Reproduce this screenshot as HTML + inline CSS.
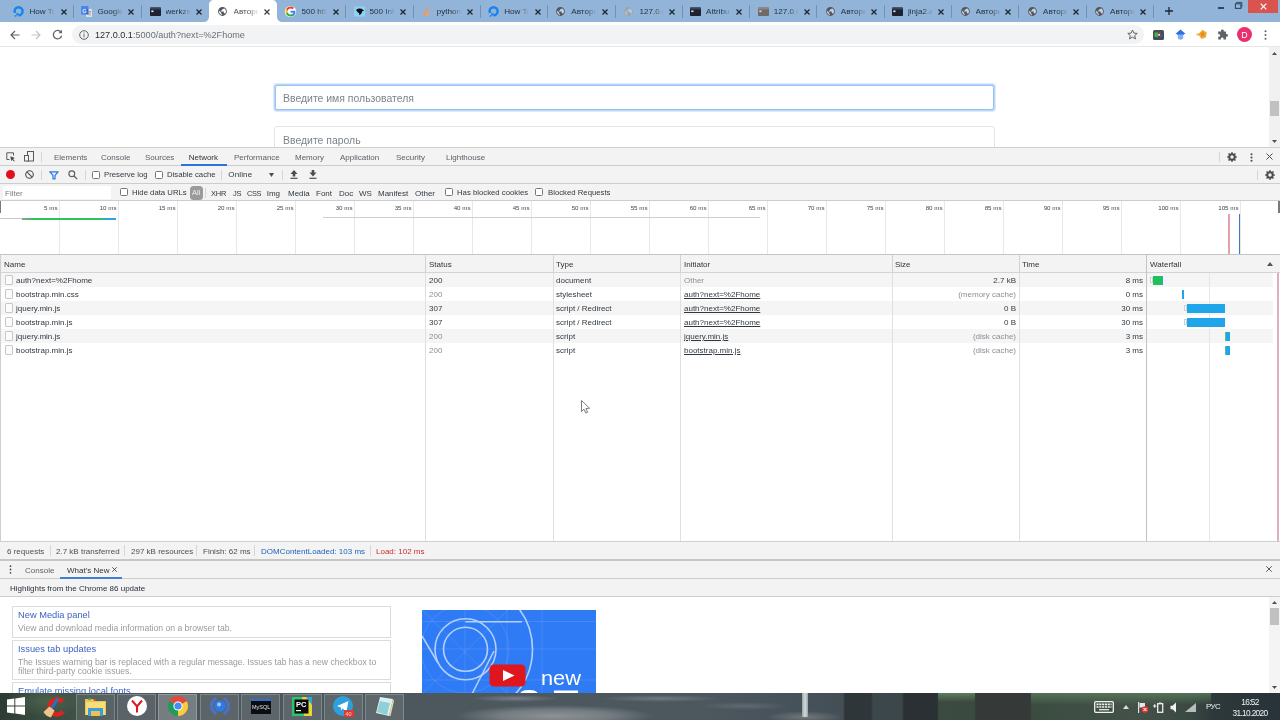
<!DOCTYPE html>
<html lang="ru">
<head>
<meta charset="utf-8">
<title>Авторизация</title>
<style>
*{box-sizing:border-box;margin:0;padding:0}
html,body{width:1280px;height:720px;overflow:hidden;background:#fff}
body{position:relative;font-family:"Liberation Sans","DejaVu Sans",sans-serif;font-size:8px;color:#303942;line-height:1}
#root{position:absolute;left:0;top:0;width:1280px;height:720px;will-change:transform}
.a{position:absolute}
.t{position:absolute;white-space:nowrap;line-height:10px;height:10px}
svg{position:absolute;overflow:visible}
/* chrome tab strip */
#strip{left:0;top:0;width:1280px;height:22px;background:#91b4d8}
.ttl{position:absolute;top:6px;font-size:8.100px;line-height:11px;height:11px;color:#2f3a47;white-space:nowrap;width:25px;overflow:hidden;-webkit-mask-image:linear-gradient(90deg,#000 60%,transparent 100%);mask-image:linear-gradient(90deg,#000 60%,transparent 100%)}
.sep{position:absolute;top:5px;width:1px;height:13px;background:#7390b1}
#toolbar{left:0;top:22px;width:1280px;height:24px;background:#fff}
#tbline{left:0;top:46px;width:1280px;height:1px;background:#e6e8ea}
#omni{left:72px;top:25px;width:1072px;height:19px;border-radius:10px;background:#f1f3f4}
/* devtools */
.bar{position:absolute;left:0;width:1280px;background:#f3f3f3}
.hl{position:absolute;left:0;width:1280px;height:1px;background:#cdcdcd}
.vl{position:absolute;width:1px;background:#d6d6d6}
</style>
</head>
<body>
<div id="root">
<!-- ======= STRIP ======= -->
<div id="strip" class="a"></div><div class="a" style="left:0;top:22px;width:1280px;height:1px;background:#c8d9eb"></div>
<svg class="a" style="left:203px;top:0" width="82" height="23" viewBox="0 0 82 23"><rect x="0" y="22" width="82" height="1" fill="#fff"/><path d="M0 22 C4 22 6 20 6 16 L6 5 C6 2 8 0 11 0 L69 0 C72 0 74 2 74 5 L74 16 C74 20 76 22 80 22 Z" fill="#fff"/></svg>
<svg style="left:13px;top:6px" width="11" height="11" viewBox="0 0 11 11"><circle cx="5.6" cy="5.3" r="4" fill="none" stroke="#1683ee" stroke-width="2.4"/><rect x="0.3" y="7" width="5.200" height="4" fill="#91b4d8"/><rect x="3.3" y="7.200" width="2.3" height="2.3" fill="#1683ee"/><rect x="1.700" y="9.200" width="1.600" height="1.500" fill="#1683ee"/></svg><div class="ttl" style="left:29.5px;color:#27313d">How Tc</div><svg style="left:60.5px;top:9px" width="6" height="6" viewBox="0 0 6 6"><path d="M0.500 0.500 L5.500 5.500 M5.500 0.500 L0.500 5.500" stroke="#1d2630" stroke-width="1.250" fill="none"/></svg>
<svg style="left:81px;top:6px" width="11" height="11" viewBox="0 0 11 11"><rect x="0" y="0" width="7.5" height="8.5" rx="1" fill="#4a85ee"/><rect x="5" y="3" width="6" height="8" rx="1" fill="#dfe3ea"/><path d="M5 3 L7.5 3 L7.5 8.5 L5 8.5 Z" fill="#3a66c4"/><text x="1.2" y="6.8" font-size="6" font-weight="bold" fill="#dfe9fb" font-family="Liberation Sans,sans-serif">G</text><path d="M7 5.500 H10 M8.500 5 V5.500 M9.600 5.500 C9.300 7.500 8 8.800 7 9.300 M7.500 6.500 C8 8 9 9 10 9.400" stroke="#7a8290" stroke-width="0.600" fill="none"/></svg><div class="ttl" style="left:97.5px;color:#27313d">Google</div><svg style="left:128.25px;top:9px" width="6" height="6" viewBox="0 0 6 6"><path d="M0.500 0.500 L5.500 5.500 M5.500 0.500 L0.500 5.500" stroke="#1d2630" stroke-width="1.250" fill="none"/></svg>
<svg style="left:149.5px;top:6px" width="11" height="11" viewBox="0 0 11 11"><rect x="0" y="1.5" width="11" height="8.5" rx="0.8" fill="#1e2230"/><rect x="0" y="1.5" width="11" height="2" rx="0.8" fill="#3d4353"/><rect x="1.3" y="4.5" width="2.2" height="1.6" fill="#e8e8e8"/></svg><div class="ttl" style="left:165.5px;color:#27313d">werkze</div><svg style="left:196.25px;top:9px" width="6" height="6" viewBox="0 0 6 6"><path d="M0.500 0.500 L5.500 5.500 M5.500 0.500 L0.500 5.500" stroke="#1d2630" stroke-width="1.250" fill="none"/></svg>
<svg style="left:217px;top:6px" width="11" height="11" viewBox="0 0 11 11"><g transform="translate(0.220 0.220) scale(0.440)"><path d="M12 2C6.480 2 2 6.480 2 12s4.480 10 10 10 10-4.480 10-10S17.520 2 12 2zm-1 17.930c-3.950-.490-7-3.850-7-7.930 0-.620.080-1.210.210-1.790L9 15v1c0 1.100.900 2 2 2v1.930zm6.900-2.540c-.260-.810-1-1.390-1.900-1.390h-1v-3c0-.550-.450-1-1-1H8v-2h2c.550 0 1-.450 1-1V7h2c1.100 0 2-.900 2-2v-.410c2.930 1.190 5 4.060 5 7.410 0 2.080-.800 3.970-2.100 5.390z" fill="#52565b"/></g></svg><div class="ttl" style="left:233.5px;color:#4a4f55">Автори</div><svg style="left:264.25px;top:9px" width="6" height="6" viewBox="0 0 6 6"><path d="M0.500 0.500 L5.500 5.500 M5.500 0.500 L0.500 5.500" stroke="#3c4043" stroke-width="1.250" fill="none"/></svg>
<svg style="left:285px;top:6px" width="11" height="11" viewBox="0 0 11 11"><circle cx="5.5" cy="5.5" r="5.600" fill="#fff"/><path d="M10.4 5.7 c0 -0.4 0 -0.7 -0.1 -1 H5.6 v2 h2.7 c-0.1 0.6 -0.5 1.2 -1 1.5 v1.3 h1.6 c1 -0.9 1.5 -2.2 1.5 -3.8z" fill="#4285f4"/><path d="M5.6 10.6 c1.4 0 2.5 -0.5 3.3 -1.2 l-1.6 -1.3 c-0.5 0.3 -1 0.5 -1.7 0.5 c-1.300 0 -2.4 -0.9 -2.8 -2.100 H1.100 v1.300 c0.800 1.700 2.500 2.800 4.500 2.800z" fill="#34a853"/><path d="M2.800 6.500 c-0.100 -0.300 -0.200 -0.600 -0.200 -1 s0.100 -0.700 0.200 -1 V3.200 H1.100 C0.800 3.900 0.600 4.700 0.600 5.500 s0.200 1.600 0.500 2.300 l1.700 -1.300z" fill="#fbbc05"/><path d="M5.600 2.400 c0.800 0 1.400 0.300 2 0.800 l1.400 -1.400 C8.100 0.900 7 0.400 5.600 0.400 c-2 0 -3.700 1.100 -4.500 2.800 l1.700 1.300 c0.400 -1.200 1.500 -2.100 2.800 -2.100z" fill="#ea4335"/><circle cx="5.5" cy="5.500" r="5.400" fill="#fff" style="mix-blend-mode:normal" opacity="0"/></svg><div class="ttl" style="left:301.5px;color:#27313d">500 htt</div><svg style="left:332.5px;top:9px" width="6" height="6" viewBox="0 0 6 6"><path d="M0.500 0.500 L5.500 5.500 M5.500 0.500 L0.500 5.500" stroke="#1d2630" stroke-width="1.250" fill="none"/></svg>
<svg style="left:353.5px;top:6px" width="11" height="11" viewBox="0 0 11 11"><rect x="0" y="0.500" width="11" height="10" fill="#8fd3f4"/><path d="M2 4.500 C2.500 2.500 5 2 7 2.800 C8.500 3.200 9.500 4 10 5 L8 5.200 C8 6.500 7.500 7.800 6 8.800 L5 8.800 L5.200 7 C4 6.800 3.200 6 3 5 Z" fill="#0c0c10"/></svg><div class="ttl" style="left:369.5px;color:#27313d">500 Int</div><svg style="left:399.5px;top:9px" width="6" height="6" viewBox="0 0 6 6"><path d="M0.500 0.500 L5.500 5.500 M5.500 0.500 L0.500 5.500" stroke="#1d2630" stroke-width="1.250" fill="none"/></svg>
<svg style="left:420.5px;top:6px" width="11" height="11" viewBox="0 0 11 11"><path d="M2 10 C2.500 7 4 3 7.500 1 C8 3 8.200 6 7.500 9.500 C6 10 4 10.200 2 10 Z" fill="#dca57a"/><path d="M3 9.500 C4.500 7 6 4 7.200 2" stroke="#c98e62" stroke-width="0.600" fill="none"/></svg><div class="ttl" style="left:436.75px;color:#27313d">python</div><svg style="left:467px;top:9px" width="6" height="6" viewBox="0 0 6 6"><path d="M0.500 0.500 L5.500 5.500 M5.500 0.500 L0.500 5.500" stroke="#1d2630" stroke-width="1.250" fill="none"/></svg>
<svg style="left:488px;top:6px" width="11" height="11" viewBox="0 0 11 11"><circle cx="5.6" cy="5.3" r="4" fill="none" stroke="#1683ee" stroke-width="2.4"/><rect x="0.3" y="7" width="5.200" height="4" fill="#91b4d8"/><rect x="3.3" y="7.200" width="2.3" height="2.3" fill="#1683ee"/><rect x="1.700" y="9.200" width="1.600" height="1.500" fill="#1683ee"/></svg><div class="ttl" style="left:504.25px;color:#27313d">How Tc</div><svg style="left:534.5px;top:9px" width="6" height="6" viewBox="0 0 6 6"><path d="M0.500 0.500 L5.500 5.500 M5.500 0.500 L0.500 5.500" stroke="#1d2630" stroke-width="1.250" fill="none"/></svg>
<svg style="left:555px;top:6px" width="11" height="11" viewBox="0 0 11 11"><circle cx="5.500" cy="5.500" r="4" fill="#c3d4e8"/><g transform="translate(0.220 0.220) scale(0.440)"><path d="M12 2C6.480 2 2 6.480 2 12s4.480 10 10 10 10-4.480 10-10S17.520 2 12 2zm-1 17.930c-3.950-.490-7-3.850-7-7.930 0-.620.080-1.210.210-1.790L9 15v1c0 1.100.900 2 2 2v1.930zm6.900-2.540c-.260-.810-1-1.390-1.900-1.390h-1v-3c0-.550-.450-1-1-1H8v-2h2c.550 0 1-.450 1-1V7h2c1.100 0 2-.900 2-2v-.410c2.930 1.190 5 4.060 5 7.410 0 2.080-.800 3.970-2.100 5.390z" fill="#52565b"/></g></svg><div class="ttl" style="left:571.25px;color:#27313d">Автори</div><svg style="left:601.5px;top:9px" width="6" height="6" viewBox="0 0 6 6"><path d="M0.500 0.500 L5.500 5.500 M5.500 0.500 L0.500 5.500" stroke="#1d2630" stroke-width="1.250" fill="none"/></svg>
<svg style="left:622.5px;top:6px" width="11" height="11" viewBox="0 0 11 11"><circle cx="5.500" cy="5.500" r="4" fill="#b7c9de"/><g transform="translate(0.220 0.220) scale(0.440)"><path d="M12 2C6.480 2 2 6.480 2 12s4.480 10 10 10 10-4.480 10-10S17.520 2 12 2zm-1 17.930c-3.950-.490-7-3.850-7-7.930 0-.620.080-1.210.210-1.790L9 15v1c0 1.100.900 2 2 2v1.930zm6.900-2.540c-.260-.810-1-1.390-1.900-1.390h-1v-3c0-.550-.450-1-1-1H8v-2h2c.550 0 1-.450 1-1V7h2c1.100 0 2-.900 2-2v-.410c2.930 1.190 5 4.060 5 7.410 0 2.080-.800 3.970-2.100 5.390z" fill="#9aa3ad"/></g></svg><div class="ttl" style="left:639.4px;color:#27313d">127.0.0</div><svg style="left:669px;top:9px" width="6" height="6" viewBox="0 0 6 6"><path d="M0.500 0.500 L5.500 5.500 M5.500 0.500 L0.500 5.500" stroke="#1d2630" stroke-width="1.250" fill="none"/></svg>
<svg style="left:690px;top:6px" width="11" height="11" viewBox="0 0 11 11"><rect x="0" y="1.5" width="11" height="8.5" rx="0.8" fill="#1e2230"/><rect x="0" y="1.5" width="11" height="2" rx="0.8" fill="#3d4353"/><rect x="1.3" y="4.5" width="2.2" height="1.6" fill="#e8e8e8"/></svg><div class="ttl" style="left:706px;color:#27313d">Attribu</div><svg style="left:736.25px;top:9px" width="6" height="6" viewBox="0 0 6 6"><path d="M0.500 0.500 L5.500 5.500 M5.500 0.500 L0.500 5.500" stroke="#1d2630" stroke-width="1.250" fill="none"/></svg>
<svg style="left:757.5px;top:6px" width="11" height="11" viewBox="0 0 11 11"><rect x="0" y="1.5" width="11" height="8.5" rx="0.8" fill="#6f6a68"/><rect x="0" y="1.5" width="11" height="2" rx="0.8" fill="#8b8684"/><rect x="1.3" y="4.5" width="2.2" height="1.6" fill="#d8d8d8"/></svg><div class="ttl" style="left:773.75px;color:#27313d">127.0.0</div><svg style="left:803.75px;top:9px" width="6" height="6" viewBox="0 0 6 6"><path d="M0.500 0.500 L5.500 5.500 M5.500 0.500 L0.500 5.500" stroke="#1d2630" stroke-width="1.250" fill="none"/></svg>
<svg style="left:824.5px;top:6px" width="11" height="11" viewBox="0 0 11 11"><circle cx="5.500" cy="5.500" r="4" fill="#c3d4e8"/><g transform="translate(0.220 0.220) scale(0.440)"><path d="M12 2C6.480 2 2 6.480 2 12s4.480 10 10 10 10-4.480 10-10S17.520 2 12 2zm-1 17.930c-3.950-.490-7-3.850-7-7.930 0-.620.080-1.210.210-1.790L9 15v1c0 1.100.900 2 2 2v1.930zm6.900-2.540c-.260-.810-1-1.390-1.900-1.390h-1v-3c0-.550-.450-1-1-1H8v-2h2c.550 0 1-.450 1-1V7h2c1.100 0 2-.900 2-2v-.410c2.930 1.190 5 4.060 5 7.410 0 2.080-.800 3.970-2.100 5.390z" fill="#52565b"/></g></svg><div class="ttl" style="left:840.75px;color:#27313d">Автори</div><svg style="left:870.75px;top:9px" width="6" height="6" viewBox="0 0 6 6"><path d="M0.500 0.500 L5.500 5.500 M5.500 0.500 L0.500 5.500" stroke="#1d2630" stroke-width="1.250" fill="none"/></svg>
<svg style="left:892px;top:6px" width="11" height="11" viewBox="0 0 11 11"><rect x="0" y="1.5" width="11" height="8.5" rx="0.8" fill="#1e2230"/><rect x="0" y="1.5" width="11" height="2" rx="0.8" fill="#3d4353"/><rect x="1.3" y="4.5" width="2.2" height="1.6" fill="#e8e8e8"/></svg><div class="ttl" style="left:908px;color:#27313d">jinja2.e</div><svg style="left:938.25px;top:9px" width="6" height="6" viewBox="0 0 6 6"><path d="M0.500 0.500 L5.500 5.500 M5.500 0.500 L0.500 5.500" stroke="#1d2630" stroke-width="1.250" fill="none"/></svg>
<svg style="left:959.5px;top:6px" width="11" height="11" viewBox="0 0 11 11"><circle cx="5.500" cy="5.500" r="4" fill="#c3d4e8"/><g transform="translate(0.220 0.220) scale(0.440)"><path d="M12 2C6.480 2 2 6.480 2 12s4.480 10 10 10 10-4.480 10-10S17.520 2 12 2zm-1 17.930c-3.950-.490-7-3.850-7-7.930 0-.620.080-1.210.210-1.790L9 15v1c0 1.100.900 2 2 2v1.930zm6.900-2.540c-.260-.810-1-1.390-1.900-1.390h-1v-3c0-.550-.450-1-1-1H8v-2h2c.550 0 1-.450 1-1V7h2c1.100 0 2-.900 2-2v-.410c2.930 1.190 5 4.060 5 7.410 0 2.080-.800 3.970-2.100 5.390z" fill="#52565b"/></g></svg><div class="ttl" style="left:975.5px;color:#27313d">Автори</div><svg style="left:1005.25px;top:9px" width="6" height="6" viewBox="0 0 6 6"><path d="M0.500 0.500 L5.500 5.500 M5.500 0.500 L0.500 5.500" stroke="#1d2630" stroke-width="1.250" fill="none"/></svg>
<svg style="left:1026.5px;top:6px" width="11" height="11" viewBox="0 0 11 11"><circle cx="5.500" cy="5.500" r="4" fill="#c3d4e8"/><g transform="translate(0.220 0.220) scale(0.440)"><path d="M12 2C6.480 2 2 6.480 2 12s4.480 10 10 10 10-4.480 10-10S17.520 2 12 2zm-1 17.930c-3.950-.490-7-3.850-7-7.930 0-.620.080-1.210.210-1.790L9 15v1c0 1.100.900 2 2 2v1.930zm6.900-2.540c-.260-.810-1-1.390-1.900-1.390h-1v-3c0-.550-.450-1-1-1H8v-2h2c.550 0 1-.450 1-1V7h2c1.100 0 2-.900 2-2v-.410c2.930 1.190 5 4.060 5 7.410 0 2.080-.800 3.970-2.100 5.390z" fill="#52565b"/></g></svg><div class="ttl" style="left:1043px;color:#27313d">Автори</div><svg style="left:1072.75px;top:9px" width="6" height="6" viewBox="0 0 6 6"><path d="M0.500 0.500 L5.500 5.500 M5.500 0.500 L0.500 5.500" stroke="#1d2630" stroke-width="1.250" fill="none"/></svg>
<svg style="left:1094px;top:6px" width="11" height="11" viewBox="0 0 11 11"><circle cx="5.500" cy="5.500" r="4" fill="#c3d4e8"/><g transform="translate(0.220 0.220) scale(0.440)"><path d="M12 2C6.480 2 2 6.480 2 12s4.480 10 10 10 10-4.480 10-10S17.520 2 12 2zm-1 17.930c-3.950-.490-7-3.850-7-7.930 0-.620.080-1.210.210-1.790L9 15v1c0 1.100.900 2 2 2v1.930zm6.900-2.540c-.260-.810-1-1.390-1.900-1.390h-1v-3c0-.550-.450-1-1-1H8v-2h2c.550 0 1-.450 1-1V7h2c1.100 0 2-.900 2-2v-.410c2.930 1.190 5 4.060 5 7.410 0 2.080-.800 3.970-2.100 5.390z" fill="#52565b"/></g></svg><div class="ttl" style="left:1110px;color:#27313d">Автори</div><svg style="left:1140.25px;top:9px" width="6" height="6" viewBox="0 0 6 6"><path d="M0.500 0.500 L5.500 5.500 M5.500 0.500 L0.500 5.500" stroke="#1d2630" stroke-width="1.250" fill="none"/></svg>
<div class="sep" style="left:72.75px"></div><div class="sep" style="left:140.75px"></div><div class="sep" style="left:344.5px"></div><div class="sep" style="left:412.5px"></div><div class="sep" style="left:480.0px"></div><div class="sep" style="left:547.0px"></div><div class="sep" style="left:614.5px"></div><div class="sep" style="left:682.0px"></div><div class="sep" style="left:748.75px"></div><div class="sep" style="left:816.25px"></div><div class="sep" style="left:883.75px"></div><div class="sep" style="left:950.75px"></div><div class="sep" style="left:1018.25px"></div><div class="sep" style="left:1085.75px"></div><div class="sep" style="left:1153.25px"></div>
<svg style="left:1165px;top:7px" width="8" height="8" viewBox="0 0 8 8"><path d="M4 0 V8 M0 4 H8" stroke="#1d2630" stroke-width="1.300"/></svg>
<div class="a" style="left:1218px;top:7px;width:6px;height:2px;background:#31475f"></div>
<svg style="left:1235px;top:2px" width="7.300" height="7.300" viewBox="0 0 8 8"><path d="M1.500 1.500 V0.500 H7.500 V5.500 H6.500" stroke="#31475f" stroke-width="1" fill="none"/><rect x="0.500" y="2" width="6" height="5" fill="none" stroke="#31475f" stroke-width="1.200"/></svg>
<div class="a" style="left:1248px;top:0;width:30px;height:13px;background:#d9534f"></div>
<svg style="left:1260px;top:3px" width="7" height="7" viewBox="0 0 7 7"><path d="M0.700 0.700 L6.300 6.300 M6.300 0.700 L0.700 6.300" stroke="#fff" stroke-width="1.200" fill="none"/></svg>
<!-- ======= TOOLBAR ======= -->
<div id="toolbar" class="a"></div><div id="omni" class="a"></div><div id="tbline" class="a"></div>
<svg style="left:10px;top:30px" width="10" height="10" viewBox="0 0 10 10"><path d="M9.500 5 H1.200 M5 1 L1 5 L5 9" stroke="#5f6368" stroke-width="1.200" fill="none"/></svg>
<svg style="left:31px;top:30px" width="10" height="10" viewBox="0 0 10 10"><path d="M0.500 5 H8.800 M5 1 L9 5 L5 9" stroke="#c2c5c9" stroke-width="1.200" fill="none"/></svg>
<svg style="left:52px;top:29px" width="11" height="11" viewBox="0 0 11 11"><path d="M9 3.200 A4.200 4.200 0 1 0 9.600 6.800" stroke="#5f6368" stroke-width="1.300" fill="none"/><path d="M10 0.800 V4.300 H6.500 Z" fill="#5f6368"/></svg>
<svg style="left:79px;top:30px" width="10" height="10" viewBox="0 0 10 10"><circle cx="5" cy="5" r="4.300" fill="none" stroke="#5f6368" stroke-width="1"/><rect x="4.500" y="4.300" width="1" height="3" fill="#5f6368"/><rect x="4.500" y="2.500" width="1" height="1" fill="#5f6368"/></svg>
<div class="t" style="left:95px;top:29px;font-size:9.100px;line-height:12px;height:12px;color:#6b7075"><span style="color:#2b2e31">127.0.0.1</span>:5000/auth?next=%2Fhome</div>
<svg style="left:1127px;top:29px" width="11" height="11" viewBox="0 0 11 11"><path d="M5.500 1 L6.900 4.100 L10.200 4.400 L7.700 6.600 L8.500 9.900 L5.500 8.100 L2.500 9.900 L3.300 6.600 L0.800 4.400 L4.100 4.100 Z" fill="none" stroke="#5f6368" stroke-width="1"/></svg>
<svg style="left:1153px;top:30px" width="11" height="10" viewBox="0 0 11 10"><rect x="0" y="0" width="11" height="10" rx="1.500" fill="#4a4d4f"/><rect x="1.500" y="2.500" width="3.500" height="4.500" fill="#3fb24a"/><rect x="5.500" y="2.500" width="2" height="2" fill="#d93a30"/><rect x="7" y="4.500" width="2.500" height="2.500" fill="#2c58c9"/><rect x="5.300" y="4" width="1.700" height="1.700" fill="#eee"/></svg>
<svg style="left:1175px;top:29px" width="11" height="11" viewBox="0 0 11 11"><path d="M5.500 0.500 L10.700 5 L9 5 L8.500 6 L2.500 6 L2 5 L0.300 5 Z" fill="#2f6fe0"/><path d="M2.800 5.500 H8.200 V8.500 C8.200 10 6.800 10.700 5.500 10.700 C4.200 10.700 2.800 10 2.800 8.500 Z" fill="#7fb0f5"/></svg>
<svg style="left:1196px;top:29px" width="12" height="11" viewBox="0 0 12 11"><path d="M0.500 5 L3 4.200 L6.500 0.800 L10.800 3.500 L9.800 8.500 L5.500 10 L3 6.500 L0.500 6.200 Z" fill="#f4a73a"/><path d="M4.500 4 L8 3 L8.500 7 L5.500 7.500 Z" fill="#e38d1f"/></svg>
<svg style="left:1217px;top:29px" width="11" height="11" viewBox="0 0 11 11"><path d="M4 1.800 a1.400 1.400 0 0 1 2.800 0 V2.500 H9 V5 h0.600 a1.400 1.400 0 0 1 0 2.800 H9 V10.500 H6.500 V9.800 a1.300 1.300 0 0 0 -2.600 0 V10.500 H1.200 V7.800 H1.900 a1.300 1.300 0 0 0 0 -2.600 H1.200 V2.500 H4 Z" fill="#5f6368"/></svg>
<div class="a" style="left:1237px;top:27px;width:15px;height:15px;border-radius:8px;background:#e9306f"></div><div class="t" style="left:1237px;top:30px;width:15px;text-align:center;color:#fff;font-size:8.800px">D</div>
<svg style="left:1264px;top:30px" width="3" height="10" viewBox="0 0 3 10"><circle cx="1.500" cy="1.300" r="1" fill="#5f6368"/><circle cx="1.500" cy="5" r="1" fill="#5f6368"/><circle cx="1.500" cy="8.700" r="1" fill="#5f6368"/></svg>
<!-- ======= PAGE ======= -->
<div class="a" style="left:273px;top:83px;width:723px;height:29px;border-radius:4px;background:#deeafa"></div><div class="a" style="left:274px;top:84px;width:721px;height:27px;border-radius:3px;background:#bcd7f6"></div><div class="a" style="left:275px;top:85px;width:719px;height:25px;border:1px solid #93c1f0;border-radius:2.500px;background:#fff"></div>
<div class="t" style="left:283px;top:93.200px;font-size:10.450px;line-height:12px;height:12px;color:#7d848b">Введите имя пользователя</div>
<div class="a" style="left:274px;top:126px;width:721px;height:30px;border:1px solid #e2e5e8;border-radius:3px;background:#fff"></div>
<div class="t" style="left:283px;top:134.900px;font-size:10.450px;line-height:12px;height:12px;color:#7d848b">Введите пароль</div>
<div class="a" style="left:1269px;top:47px;width:11px;height:101px;background:#f1f1f1"></div><div class="a" style="left:1270px;top:101px;width:9px;height:15px;background:#c1c1c1"></div><svg style="left:1272px;top:52px" width="5" height="3" viewBox="0 0 5 3"><path d="M0 3 L2.500 0 L5 3 Z" fill="#505050"/></svg><svg style="left:1272px;top:140px" width="5" height="3" viewBox="0 0 5 3"><path d="M0 0 L2.500 3 L5 0 Z" fill="#505050"/></svg>
<!-- ======= DEVTOOLS ======= -->
<div class="hl" style="top:147px;background:#d0d0d0"></div><div class="bar" style="top:148px;height:18px"></div><div class="hl" style="top:165px"></div><div class="bar" style="top:166px;height:18px"></div><div class="hl" style="top:183px"></div><div class="bar" style="top:184px;height:17px"></div><div class="hl" style="top:200px"></div>
<svg style="left:6px;top:152px" width="10" height="10" viewBox="0 0 10 10"><path d="M7.500 3.500 V0.800 H0.800 V7.500 H3.500" fill="none" stroke="#5a5a5a" stroke-width="1"/><path d="M4.300 4.300 L9 6 L7 7 L8.800 9 L8 9.600 L6.300 7.700 L5.300 9.200 Z" fill="#4a4a4a"/></svg><svg style="left:24px;top:151px" width="10" height="11" viewBox="0 0 10 11"><rect x="3.500" y="0.500" width="6" height="9.500" fill="none" stroke="#5a5a5a" stroke-width="1"/><rect x="0.500" y="4.500" width="4" height="5.500" fill="#f3f3f3" stroke="#5a5a5a" stroke-width="1"/></svg><div class="vl" style="left:41px;top:152px;height:10px"></div>
<div class="t" style="left:54px;top:152.6px;color:#5a5f66">Elements</div><div class="t" style="left:101px;top:152.6px;color:#5a5f66">Console</div><div class="t" style="left:145px;top:152.6px;color:#5a5f66">Sources</div><div class="t" style="left:188.7px;top:152.6px;color:#333">Network</div><div class="t" style="left:234px;top:152.6px;color:#5a5f66">Performance</div><div class="t" style="left:295px;top:152.6px;color:#5a5f66">Memory</div><div class="t" style="left:340px;top:152.6px;color:#5a5f66">Application</div><div class="t" style="left:396px;top:152.6px;color:#5a5f66">Security</div><div class="t" style="left:446px;top:152.6px;color:#5a5f66">Lighthouse</div><div class="a" style="left:181px;top:164px;width:46px;height:2px;background:#2f73d8"></div>
<div class="vl" style="left:1219px;top:152px;height:10px"></div><svg style="left:1227px;top:152px" width="10" height="10" viewBox="0.500 0 10 10"><path d="M5 0 L6 0 L6.300 1.300 L7.400 1.800 L8.600 1.100 L9.400 1.900 L8.700 3.100 L9.200 4.200 L10.500 4.500 V5.500 L9.200 5.800 L8.700 6.900 L9.400 8.100 L8.600 8.900 L7.400 8.200 L6.300 8.700 L6 10 H5 L4.700 8.700 L3.600 8.200 L2.400 8.900 L1.600 8.100 L2.300 6.900 L1.800 5.800 L0.500 5.500 V4.500 L1.800 4.200 L2.300 3.100 L1.600 1.900 L2.400 1.100 L3.600 1.800 L4.700 1.300 Z M5.500 3.300 A1.700 1.700 0 1 0 5.500 6.700 A1.700 1.700 0 1 0 5.500 3.300 Z" fill="#4d4d4d" fill-rule="evenodd"/></svg><svg style="left:1250px;top:153px" width="3" height="9" viewBox="0 0 3 9"><circle cx="1.500" cy="1.200" r="1.050" fill="#4d4d4d"/><circle cx="1.500" cy="4.500" r="1.050" fill="#4d4d4d"/><circle cx="1.500" cy="7.800" r="1.050" fill="#4d4d4d"/></svg><svg style="left:1266px;top:153px" width="7" height="7" viewBox="0 0 7 7"><path d="M0.500 0.500 L6.500 6.500 M6.500 0.500 L0.500 6.500" stroke="#4d4d4d" stroke-width="1" fill="none"/></svg>
<div class="a" style="left:6px;top:170px;width:9px;height:9px;border-radius:5px;background:#e0101c"></div><svg style="left:25px;top:170px" width="9" height="9" viewBox="0 0 9 9"><circle cx="4.500" cy="4.500" r="3.800" fill="none" stroke="#4d4d4d" stroke-width="1.100"/><path d="M1.800 1.800 L7.200 7.200" stroke="#4d4d4d" stroke-width="1.100"/></svg><div class="vl" style="left:41px;top:170px;height:10px"></div><svg style="left:49px;top:171px" width="10" height="9" viewBox="0 0 10 9"><path d="M0.800 0.800 H9.200 L6 4.300 V8 H4 V4.300 Z" fill="#e8f0fd" stroke="#2d73e0" stroke-width="1.200" stroke-linejoin="round"/></svg><svg style="left:68px;top:170px" width="10" height="10" viewBox="0 0 10 10"><circle cx="3.800" cy="3.800" r="2.900" fill="none" stroke="#5a5a5a" stroke-width="1.100"/><path d="M6 6 L9.200 9.200" stroke="#5a5a5a" stroke-width="1.200"/></svg><div class="vl" style="left:85px;top:170px;height:10px"></div>
<div class="a" style="left:92px;top:171px;width:8px;height:8px;border:1px solid #767676;border-radius:1.500px;background:#fff"></div><div class="t" style="left:104px;top:170.4px;font-size:7.750px">Preserve log</div><div class="a" style="left:155px;top:171px;width:8px;height:8px;border:1px solid #767676;border-radius:1.500px;background:#fff"></div><div class="t" style="left:167px;top:170.4px;font-size:7.750px">Disable cache</div><div class="vl" style="left:221px;top:170px;height:10px"></div><div class="t" style="left:228.3px;top:170.4px;font-size:8px;letter-spacing:0.150px">Online</div><svg style="left:269px;top:173px" width="5" height="4" viewBox="0 0 5 4"><path d="M0 0 H5 L2.500 4 Z" fill="#4d4d4d"/></svg><div class="vl" style="left:282px;top:170px;height:10px"></div><svg style="left:290px;top:170px" width="8" height="9" viewBox="0 0 8 9"><path d="M4 0 L7.500 4 H5.300 V6.500 H2.700 V4 H0.500 Z" fill="#4d4d4d"/><rect x="0.500" y="7.700" width="7" height="1.200" fill="#4d4d4d"/></svg><svg style="left:309px;top:170px" width="8" height="9" viewBox="0 0 8 9"><path d="M4 6.500 L7.500 2.500 H5.300 V0 H2.700 V2.500 H0.500 Z" fill="#4d4d4d"/><rect x="0.500" y="7.700" width="7" height="1.200" fill="#4d4d4d"/></svg>
<div class="vl" style="left:1257px;top:170px;height:10px"></div><svg style="left:1265px;top:170px" width="10" height="10" viewBox="0.500 0 10 10"><path d="M5 0 L6 0 L6.300 1.300 L7.400 1.800 L8.600 1.100 L9.400 1.900 L8.700 3.100 L9.200 4.200 L10.500 4.500 V5.500 L9.200 5.800 L8.700 6.900 L9.400 8.100 L8.600 8.900 L7.400 8.200 L6.300 8.700 L6 10 H5 L4.700 8.700 L3.600 8.200 L2.400 8.900 L1.600 8.100 L2.300 6.900 L1.800 5.800 L0.500 5.500 V4.500 L1.800 4.200 L2.300 3.100 L1.600 1.900 L2.400 1.100 L3.600 1.800 L4.700 1.300 Z M5.500 3.300 A1.700 1.700 0 1 0 5.500 6.700 A1.700 1.700 0 1 0 5.500 3.300 Z" fill="#4d4d4d" fill-rule="evenodd"/></svg>
<div class="a" style="left:3px;top:186px;width:108px;height:13px;background:#fff"></div><div class="t" style="left:5px;top:188.6px;color:#7a7f85">Filter</div><div class="a" style="left:120px;top:188px;width:8px;height:8px;border:1px solid #767676;border-radius:1.500px;background:#fff"></div><div class="t" style="left:132px;top:188px;font-size:7.750px">Hide data URLs</div><div class="a" style="left:190px;top:186px;width:13px;height:14px;border-radius:3.500px;background:#9b9b9b"></div><div class="t" style="left:192px;top:188px;color:#f0f0f0;font-size:7.500px">All</div><div class="vl" style="left:205px;top:188px;height:10px"></div><div class="t" style="left:211px;top:188.5px;font-size:7.500px;letter-spacing:-0.250px">XHR</div><div class="t" style="left:233px;top:188.5px;font-size:7.500px;letter-spacing:-0.250px">JS</div><div class="t" style="left:247px;top:188.5px;font-size:7.400px;letter-spacing:-0.350px">CSS</div><div class="t" style="left:266.7px;top:188.5px;">Img</div><div class="t" style="left:288px;top:188.5px;">Media</div><div class="t" style="left:316px;top:188.5px;">Font</div><div class="t" style="left:339px;top:188.5px;">Doc</div><div class="t" style="left:359px;top:188.5px;">WS</div><div class="t" style="left:378px;top:188.5px;">Manifest</div><div class="t" style="left:415px;top:188.5px;">Other</div>
<div class="a" style="left:445px;top:188px;width:8px;height:8px;border:1px solid #767676;border-radius:1.500px;background:#fff"></div><div class="t" style="left:457px;top:188px;font-size:7.750px">Has blocked cookies</div><div class="a" style="left:535px;top:188px;width:8px;height:8px;border:1px solid #767676;border-radius:1.500px;background:#fff"></div><div class="t" style="left:548px;top:188px;font-size:7.750px">Blocked Requests</div>
<div class="vl" style="left:59px;top:201px;height:53px;background:#e8e8e8"></div><div class="t" style="right:1222.5px;top:203.3px;font-size:6.200px;color:#41474d">5 ms</div><div class="vl" style="left:118px;top:201px;height:53px;background:#e8e8e8"></div><div class="t" style="right:1163.5px;top:203.3px;font-size:6.200px;color:#41474d">10 ms</div><div class="vl" style="left:177px;top:201px;height:53px;background:#e8e8e8"></div><div class="t" style="right:1104.5px;top:203.3px;font-size:6.200px;color:#41474d">15 ms</div><div class="vl" style="left:236px;top:201px;height:53px;background:#e8e8e8"></div><div class="t" style="right:1045.5px;top:203.3px;font-size:6.200px;color:#41474d">20 ms</div><div class="vl" style="left:295px;top:201px;height:53px;background:#e8e8e8"></div><div class="t" style="right:986.5px;top:203.3px;font-size:6.200px;color:#41474d">25 ms</div><div class="vl" style="left:354px;top:201px;height:53px;background:#e8e8e8"></div><div class="t" style="right:927.5px;top:203.3px;font-size:6.200px;color:#41474d">30 ms</div><div class="vl" style="left:413px;top:201px;height:53px;background:#e8e8e8"></div><div class="t" style="right:868.5px;top:203.3px;font-size:6.200px;color:#41474d">35 ms</div><div class="vl" style="left:472px;top:201px;height:53px;background:#e8e8e8"></div><div class="t" style="right:809.5px;top:203.3px;font-size:6.200px;color:#41474d">40 ms</div><div class="vl" style="left:531px;top:201px;height:53px;background:#e8e8e8"></div><div class="t" style="right:750.5px;top:203.3px;font-size:6.200px;color:#41474d">45 ms</div><div class="vl" style="left:590px;top:201px;height:53px;background:#e8e8e8"></div><div class="t" style="right:691.5px;top:203.3px;font-size:6.200px;color:#41474d">50 ms</div><div class="vl" style="left:649px;top:201px;height:53px;background:#e8e8e8"></div><div class="t" style="right:632.5px;top:203.3px;font-size:6.200px;color:#41474d">55 ms</div><div class="vl" style="left:708px;top:201px;height:53px;background:#e8e8e8"></div><div class="t" style="right:573.5px;top:203.3px;font-size:6.200px;color:#41474d">60 ms</div><div class="vl" style="left:767px;top:201px;height:53px;background:#e8e8e8"></div><div class="t" style="right:514.5px;top:203.3px;font-size:6.200px;color:#41474d">65 ms</div><div class="vl" style="left:826px;top:201px;height:53px;background:#e8e8e8"></div><div class="t" style="right:455.5px;top:203.3px;font-size:6.200px;color:#41474d">70 ms</div><div class="vl" style="left:885px;top:201px;height:53px;background:#e8e8e8"></div><div class="t" style="right:396.5px;top:203.3px;font-size:6.200px;color:#41474d">75 ms</div><div class="vl" style="left:944px;top:201px;height:53px;background:#e8e8e8"></div><div class="t" style="right:337.5px;top:203.3px;font-size:6.200px;color:#41474d">80 ms</div><div class="vl" style="left:1003px;top:201px;height:53px;background:#e8e8e8"></div><div class="t" style="right:278.5px;top:203.3px;font-size:6.200px;color:#41474d">85 ms</div><div class="vl" style="left:1062px;top:201px;height:53px;background:#e8e8e8"></div><div class="t" style="right:219.5px;top:203.3px;font-size:6.200px;color:#41474d">90 ms</div><div class="vl" style="left:1121px;top:201px;height:53px;background:#e8e8e8"></div><div class="t" style="right:160.5px;top:203.3px;font-size:6.200px;color:#41474d">95 ms</div><div class="vl" style="left:1180px;top:201px;height:53px;background:#e8e8e8"></div><div class="t" style="right:101.5px;top:203.3px;font-size:6.200px;color:#41474d">100 ms</div><div class="vl" style="left:1240px;top:201px;height:53px;background:#e8e8e8"></div><div class="t" style="right:41.5px;top:203.3px;font-size:6.200px;color:#41474d">105 ms</div>
<div class="a" style="left:0;top:201px;width:1px;height:12px;background:#7a7a7a"></div><div class="a" style="left:1278px;top:201px;width:2px;height:12px;background:#7a7a7a"></div><div class="a" style="left:0;top:218px;width:24px;height:1px;background:#c9c9c9"></div><div class="a" style="left:22px;top:218px;width:94px;height:2px;background:linear-gradient(90deg,#9a9a9a 0,#2fc25b 12%,#2fc25b 80%,#2aa5e6 92%,#2aa5e6 100%)"></div><div class="a" style="left:323px;top:217px;width:437px;height:1px;background:#cfcfcf"></div><div class="a" style="left:1228px;top:214px;width:2px;height:40px;background:#e3a3ac"></div><div class="a" style="left:1239px;top:214px;width:1px;height:40px;background:#3f78c4"></div><div class="hl" style="top:254px;background:#c4c4c4"></div>
<div class="bar" style="top:255px;height:17px"></div><div class="hl" style="top:272px;background:#d4d4d4"></div><div class="a" style="left:0;top:273px;width:1273px;height:14px;background:#f5f5f5"></div><div class="a" style="left:0;top:301px;width:1273px;height:14px;background:#f5f5f5"></div><div class="a" style="left:0;top:329px;width:1273px;height:14px;background:#f5f5f5"></div><div class="vl" style="left:425px;top:255px;height:18px;background:#d2d2d2"></div><div class="vl" style="left:425px;top:273px;height:268px;background:#e0e0e0"></div><div class="vl" style="left:553px;top:255px;height:18px;background:#d2d2d2"></div><div class="vl" style="left:553px;top:273px;height:268px;background:#e0e0e0"></div><div class="vl" style="left:680px;top:255px;height:18px;background:#d2d2d2"></div><div class="vl" style="left:680px;top:273px;height:268px;background:#e0e0e0"></div><div class="vl" style="left:892px;top:255px;height:18px;background:#d2d2d2"></div><div class="vl" style="left:892px;top:273px;height:268px;background:#e0e0e0"></div><div class="vl" style="left:1019px;top:255px;height:18px;background:#d2d2d2"></div><div class="vl" style="left:1019px;top:273px;height:268px;background:#e0e0e0"></div><div class="vl" style="left:1146px;top:255px;height:18px;background:#c4c4c4"></div><div class="vl" style="left:1146px;top:273px;height:268px;background:#c2c2c2"></div><div class="vl" style="left:1209px;top:273px;height:268px;background:#e6e6e6"></div><div class="vl" style="left:0;top:255px;height:286px;background:#cfcfcf"></div><div class="a" style="left:1277px;top:273px;width:1.500px;height:268px;background:#deb0b9"></div>
<div class="t" style="left:4px;top:260.2px;color:#333">Name</div><div class="t" style="left:429px;top:260.2px;color:#333">Status</div><div class="t" style="left:556px;top:260.2px;color:#333">Type</div><div class="t" style="left:684px;top:260.2px;color:#333">Initiator</div><div class="t" style="left:895px;top:260.2px;color:#333">Size</div><div class="t" style="left:1022px;top:260.2px;color:#333">Time</div><div class="t" style="left:1150px;top:260.2px;color:#333">Waterfall</div><svg style="left:1267px;top:262px" width="6" height="4" viewBox="0 0 6 4"><path d="M0 4 L3 0 L6 4 Z" fill="#555"/></svg>
<div class="a" style="left:5px;top:275px;width:8px;height:10px;border:1px solid #c8c8c8;background:#fbfbfb;border-radius:1px"></div><div class="t" style="left:16px;top:276px;">auth?next=%2Fhome</div><div class="t" style="left:429px;top:276px;color:#333a41">200</div><div class="t" style="left:556px;top:276px;">document</div><div class="t" style="left:684px;top:276px;color:#8a8f94">Other</div><div class="t" style="right:264px;top:276px;color:#333a41">2.7 kB</div><div class="t" style="right:137px;top:276px;">8 ms</div>
<div class="a" style="left:5px;top:289px;width:8px;height:10px;border:1px solid #c8c8c8;background:#fbfbfb;border-radius:1px"></div><div class="t" style="left:16px;top:290px;">bootstrap.min.css</div><div class="t" style="left:429px;top:290px;color:#8a8f94">200</div><div class="t" style="left:556px;top:290px;">stylesheet</div><div class="t" style="left:684px;top:290px;text-decoration:underline">auth?next=%2Fhome</div><div class="t" style="right:264px;top:290px;color:#8a8f94">(memory cache)</div><div class="t" style="right:137px;top:290px;">0 ms</div>
<div class="a" style="left:5px;top:303px;width:8px;height:10px;border:1px solid #c8c8c8;background:#fbfbfb;border-radius:1px"></div><div class="t" style="left:16px;top:304px;">jquery.min.js</div><div class="t" style="left:429px;top:304px;color:#333a41">307</div><div class="t" style="left:556px;top:304px;">script / Redirect</div><div class="t" style="left:684px;top:304px;text-decoration:underline">auth?next=%2Fhome</div><div class="t" style="right:264px;top:304px;color:#333a41">0 B</div><div class="t" style="right:137px;top:304px;">30 ms</div>
<div class="a" style="left:5px;top:317px;width:8px;height:10px;border:1px solid #c8c8c8;background:#fbfbfb;border-radius:1px"></div><div class="t" style="left:16px;top:318px;">bootstrap.min.js</div><div class="t" style="left:429px;top:318px;color:#333a41">307</div><div class="t" style="left:556px;top:318px;">script / Redirect</div><div class="t" style="left:684px;top:318px;text-decoration:underline">auth?next=%2Fhome</div><div class="t" style="right:264px;top:318px;color:#333a41">0 B</div><div class="t" style="right:137px;top:318px;">30 ms</div>
<div class="a" style="left:5px;top:331px;width:8px;height:10px;border:1px solid #c8c8c8;background:#fbfbfb;border-radius:1px"></div><div class="t" style="left:16px;top:332px;">jquery.min.js</div><div class="t" style="left:429px;top:332px;color:#8a8f94">200</div><div class="t" style="left:556px;top:332px;">script</div><div class="t" style="left:684px;top:332px;text-decoration:underline">jquery.min.js</div><div class="t" style="right:264px;top:332px;color:#8a8f94">(disk cache)</div><div class="t" style="right:137px;top:332px;">3 ms</div>
<div class="a" style="left:5px;top:345px;width:8px;height:10px;border:1px solid #c8c8c8;background:#fbfbfb;border-radius:1px"></div><div class="t" style="left:16px;top:346px;">bootstrap.min.js</div><div class="t" style="left:429px;top:346px;color:#8a8f94">200</div><div class="t" style="left:556px;top:346px;">script</div><div class="t" style="left:684px;top:346px;text-decoration:underline">bootstrap.min.js</div><div class="t" style="right:264px;top:346px;color:#8a8f94">(disk cache)</div><div class="t" style="right:137px;top:346px;">3 ms</div>
<div class="a" style="left:1150px;top:277px;width:3px;height:6px;border:1px solid #d0d0d0;background:#fff"></div><div class="a" style="left:1153px;top:276px;width:10px;height:9px;background:#1fc15c;border-right:1px solid #2fa7c0"></div><div class="a" style="left:1182.300px;top:290px;width:1.500px;height:9px;background:#1ea5ea"></div><div class="a" style="left:1184px;top:305px;width:3px;height:6px;border:1px solid #d0d0d0;background:#fff"></div><div class="a" style="left:1187px;top:304px;width:38px;height:9px;background:#1ea5ea"></div><div class="a" style="left:1184px;top:319px;width:3px;height:6px;border:1px solid #d0d0d0;background:#fff"></div><div class="a" style="left:1187px;top:318px;width:38px;height:9px;background:#1ea5ea"></div><div class="a" style="left:1225px;top:332px;width:5px;height:9px;background:#1ea5ea;border-left:1px solid #55c08a"></div><div class="a" style="left:1225px;top:346px;width:5px;height:9px;background:#1ea5ea;border-left:1px solid #55c08a"></div>
<svg style="left:580.500px;top:400.200px" width="10" height="14" viewBox="0 0 10 14"><path d="M0.500 0.500 V11.500 L3 9.200 L4.800 13 L6.600 12.200 L4.900 8.600 L8.600 8.200 Z" fill="#fff" stroke="#454548" stroke-width="0.700" stroke-linejoin="round"/></svg>
<div class="hl" style="top:541px;background:#cfcfcf"></div><div class="bar" style="top:542px;height:17px"></div><div class="hl" style="top:559px;height:2px;background:#c6c6c6"></div><div class="t" style="left:7px;top:546.7px;color:#4a4f55">6 requests</div><div class="t" style="left:56px;top:546.7px;color:#4a4f55">2.7 kB transferred</div><div class="t" style="left:131px;top:546.7px;color:#4a4f55">297 kB resources</div><div class="t" style="left:203px;top:546.7px;color:#4a4f55">Finish: 62 ms</div><div class="t" style="left:261px;top:546.7px;color:#1b62b8">DOMContentLoaded: 103 ms</div><div class="t" style="left:376px;top:546.7px;color:#c5302a">Load: 102 ms</div><div class="vl" style="left:50px;top:545px;height:11px"></div><div class="vl" style="left:124px;top:545px;height:11px"></div><div class="vl" style="left:196px;top:545px;height:11px"></div><div class="vl" style="left:254px;top:545px;height:11px"></div><div class="vl" style="left:370px;top:545px;height:11px"></div>
<!-- ======= DRAWER ======= -->
<div class="bar" style="top:561px;height:17px"></div><div class="hl" style="top:578px"></div><div class="bar" style="top:579px;height:17px"></div><div class="hl" style="top:596px"></div>
<svg style="left:9px;top:565px" width="3" height="9" viewBox="0 0 3 9"><circle cx="1.500" cy="1.200" r="0.900" fill="#4d4d4d"/><circle cx="1.500" cy="4.500" r="0.900" fill="#4d4d4d"/><circle cx="1.500" cy="7.800" r="0.900" fill="#4d4d4d"/></svg><div class="t" style="left:25px;top:565.5px;color:#5a5f66">Console</div><div class="t" style="left:67px;top:565.5px;color:#333">What's New</div><svg style="left:112px;top:567px" width="5" height="5" viewBox="0 0 5 5"><path d="M0.300 0.300 L4.700 4.700 M4.700 0.300 L0.300 4.700" stroke="#444" stroke-width="0.900" fill="none"/></svg><div class="a" style="left:60px;top:577px;width:62px;height:2px;background:#3f7fd6"></div><svg style="left:1266px;top:566px" width="6" height="6" viewBox="0 0 6 6"><path d="M0.300 0.300 L5.700 5.700 M5.700 0.300 L0.300 5.700" stroke="#444" stroke-width="0.900" fill="none"/></svg>
<div class="t" style="left:10px;top:583.5px;color:#2b3138">Highlights from the Chrome 86 update</div><div class="a" style="left:12px;top:606px;width:379px;height:32px;border:1px solid #dcdcdc;background:#fff"></div><div class="t" style="left:18px;top:608.8px;color:#3d62c4;font-size:9.300px;line-height:12px;height:12px">New Media panel</div><div class="t" style="left:18px;top:624.2px;color:#9b9b9b;font-size:8.600px;line-height:9px;height:9px">View and download media information on a browser tab.</div><div class="a" style="left:12px;top:640px;width:379px;height:40px;border:1px solid #dcdcdc;background:#fff"></div><div class="t" style="left:18px;top:642.8px;color:#3d62c4;font-size:9.300px;line-height:12px;height:12px">Issues tab updates</div><div class="t" style="left:18px;top:658.2px;color:#9b9b9b;font-size:8.600px;line-height:9px;height:9px">The Issues warning bar is replaced with a regular message. Issues tab has a new checkbox to</div><div class="t" style="left:18px;top:667px;color:#9b9b9b;font-size:8.600px;line-height:9px;height:9px">filter third-party cookie issues.</div><div class="a" style="left:12px;top:682px;width:379px;height:40px;border:1px solid #dcdcdc;background:#fff"></div><div class="t" style="left:18px;top:684.9px;color:#3d62c4;font-size:9.300px;line-height:12px;height:12px">Emulate missing local fonts</div>
<svg style="left:422px;top:610px;overflow:hidden" width="174" height="84" viewBox="0 0 174 84"><rect width="174" height="84" fill="#2f7bf5"/><g stroke="#fff" stroke-opacity="0.180" stroke-width="0.600" fill="none"><path d="M43 0 V84 M85 0 V84 M120 0 V84 M0 39 H174 M0 11.500 H174 M0 70 H174 M0 0 L86 84 M86 0 L0 84"/><circle cx="43" cy="39" r="44"/></g><g stroke="#b2d0fb" stroke-width="1.600" fill="none"><circle cx="43.500" cy="39.300" r="22"/><circle cx="43.500" cy="39.300" r="30.500"/><circle cx="43.500" cy="39.300" r="67"/><path d="M43.500 11.800 H100"/><path d="M72 41 L50 84"/><path d="M0 26 L16 53"/></g><rect x="67.500" y="54.500" width="36" height="22" rx="4.500" fill="#df161d"/><path d="M81 60 L92.500 65.500 L81 71 Z" fill="#fff"/><text x="119" y="74.500" font-family="Liberation Sans,sans-serif" font-size="20" textLength="40" lengthAdjust="spacingAndGlyphs" fill="#fff">new</text><path d="M98 84 C99 80.500 103 80 107 80 C111 80 115 80.500 116 84 Z" fill="#fff"/><rect x="132" y="80.500" width="24" height="4" fill="#fff"/></svg>
<div class="a" style="left:1269px;top:597px;width:11px;height:96px;background:#f4f4f4"></div><div class="a" style="left:1270px;top:608px;width:9px;height:17px;background:#c1c1c1"></div><svg style="left:1272px;top:601px" width="5" height="3" viewBox="0 0 5 3"><path d="M0 3 L2.500 0 L5 3 Z" fill="#505050"/></svg><svg style="left:1272px;top:686px" width="5" height="3" viewBox="0 0 5 3"><path d="M0 0 L2.500 3 L5 0 Z" fill="#505050"/></svg>
<!-- ======= TASKBAR ======= -->
<div class="a" id="taskbar" style="left:0;top:693px;width:1280px;height:27px;overflow:hidden;background:linear-gradient(90deg,#2c3b34 0,#384a3e 40px,#3f5146 75px,#4a555a 120px,#4d585e 400px,#4c575e 700px,#46525a 800px,#434e55 843px,#2e3639 845px,#2e3639 871px,#3d484c 873px,#3b464a 902px,#2a3033 904px,#2a3033 937px,#3c4b42 939px,#3a4a40 974px,#353a38 976px,#353a38 1030px,#3a4c40 1032px,#3e4e45 1070px,#435148 1130px,#3b4943 1190px,#2c3839 1215px,#28333a 1280px)"><div class="a" style="left:455px;top:12px;width:200px;height:22px;background:radial-gradient(ellipse at center,rgba(175,178,180,.650) 0,rgba(175,178,180,.400) 40%,rgba(175,178,180,0) 70%)"></div><div class="a" style="left:470px;top:2px;width:90px;height:7px;background:radial-gradient(ellipse at center,rgba(170,174,176,.450) 0,rgba(170,174,176,0) 70%)"></div><div class="a" style="left:600px;top:2px;width:120px;height:7px;background:radial-gradient(ellipse at center,rgba(170,174,176,.400) 0,rgba(170,174,176,0) 70%)"></div><div class="a" style="left:700px;top:9px;width:90px;height:8px;background:radial-gradient(ellipse at center,rgba(150,155,158,.300) 0,rgba(150,155,158,0) 70%)"></div><div class="a" style="left:765px;top:18px;width:80px;height:12px;background:radial-gradient(ellipse at center,rgba(150,152,150,.550) 0,rgba(150,152,150,0) 70%)"></div><div class="a" style="left:802px;top:0;width:6px;height:24px;background:linear-gradient(90deg,#9aa3a6,#d4dadb 50%,#9aa3a6)"></div><div class="a" style="left:938px;top:0;width:37px;height:9px;background:linear-gradient(180deg,#5f7c5e,rgba(80,110,85,0))"></div><div class="a" style="left:1031px;top:0;width:180px;height:12px;background:linear-gradient(180deg,rgba(90,125,92,.800),rgba(80,110,85,0))"></div><div class="a" style="left:0;top:0;width:80px;height:27px;background:radial-gradient(ellipse at 45px 8px,rgba(95,125,95,.450) 0,rgba(95,125,95,0) 60%)"></div></div>
<svg style="left:7px;top:697px" width="18" height="18" viewBox="0 0 18 18"><path d="M0 2.600 L7.300 1.600 V8.500 H0 Z M8.300 1.400 L18 0 V8.500 H8.300 Z M0 9.500 H7.300 V16.400 L0 15.400 Z M8.300 9.500 H18 V18 L8.300 16.600 Z" fill="#fff"/></svg><svg style="left:43px;top:696px" width="22" height="22" viewBox="0 0 22 22"><path d="M19.500 6 A7.500 7.500 0 1 0 20 15.500" fill="none" stroke="#d8261e" stroke-width="4.500"/><path d="M13.500 2 L16 3.500 L9.500 13.500 L7 12 Z" fill="#2f6fc8"/><path d="M0.500 16 L6.500 10.500 L11.500 14.500 L8 21.500 C5 21 2 19 0.500 16 Z" fill="#eec489"/></svg>
<div class="a" style="left:76px;top:694px;width:39px;height:26px;background:rgba(255,255,255,0.09);border:1px solid rgba(255,255,255,.22);border-bottom:none"></div><div class="a" style="left:117px;top:694px;width:39px;height:26px;background:rgba(255,255,255,0.09);border:1px solid rgba(255,255,255,.22);border-bottom:none"></div><div class="a" style="left:158px;top:694px;width:39px;height:26px;background:rgba(255,255,255,0.24);border:1px solid rgba(255,255,255,.22);border-bottom:none"></div><div class="a" style="left:200px;top:694px;width:39px;height:26px;background:rgba(255,255,255,0.09);border:1px solid rgba(255,255,255,.22);border-bottom:none"></div><div class="a" style="left:241px;top:694px;width:39px;height:26px;background:rgba(255,255,255,0.09);border:1px solid rgba(255,255,255,.22);border-bottom:none"></div><div class="a" style="left:283px;top:694px;width:39px;height:26px;background:rgba(255,255,255,0.09);border:1px solid rgba(255,255,255,.22);border-bottom:none"></div><div class="a" style="left:324px;top:694px;width:39px;height:26px;background:rgba(255,255,255,0.09);border:1px solid rgba(255,255,255,.22);border-bottom:none"></div><div class="a" style="left:365px;top:694px;width:39px;height:26px;background:rgba(255,255,255,0.09);border:1px solid rgba(255,255,255,.22);border-bottom:none"></div>
<svg style="left:85px;top:697px" width="21" height="19" viewBox="0 0 21 19"><path d="M0 2 H8 L10 4 H21 V18 H0 Z" fill="#e9c353"/><rect x="1" y="5" width="19" height="13" fill="#f7dc7a"/><path d="M3 11 H18 V19 H3 Z" fill="#3f9be0"/><rect x="6" y="14" width="9" height="5" fill="#e9c353"/><rect x="3" y="1" width="3" height="2" fill="#4aa657"/><rect x="9" y="2" width="2" height="2" fill="#d9432f"/></svg><div class="a" style="left:127px;top:696px;width:20px;height:20px;border-radius:10px;background:#fff"></div><svg style="left:131px;top:700px" width="12" height="13" viewBox="0 0 12 13"><path d="M1 0.500 L6 6.500 L11 0.500 M6 6.500 V12.500" stroke="#e0161e" stroke-width="2" fill="none"/></svg><svg style="left:168px;top:696px" width="20" height="20" viewBox="0 0 20 20"><circle cx="10" cy="10" r="10" fill="#dd4b3e"/><path d="M10 10 L1.340 5 A10 10 0 0 0 10 20 Z" fill="#1a9f5b"/><path d="M10 10 L10 20 A10 10 0 0 0 18.660 5 Z" fill="#fbcd3e"/><path d="M10 10 L18.660 5 A10 10 0 0 0 1.340 5 Z" fill="#dd4b3e"/><circle cx="10" cy="10" r="4.600" fill="#fff"/><circle cx="10" cy="10" r="3.600" fill="#4a8af4"/></svg>
<svg style="left:209px;top:695px" width="22" height="22" viewBox="0 0 22 22"><circle cx="11" cy="11" r="8.500" fill="none" stroke="#4c70c4" stroke-width="3.300" stroke-dasharray="19 7.700" transform="rotate(-64 11 11)"/><circle cx="11" cy="11" r="5.500" fill="#2f7be6"/><circle cx="10" cy="9.500" r="2" fill="#9cc8fb"/></svg><svg style="left:251px;top:699px" width="20" height="15" viewBox="0 0 20 15"><rect width="20" height="15" fill="#0c0d12"/><rect width="20" height="2" fill="#2f6fd0"/><text x="1" y="9.500" font-family="Liberation Sans,sans-serif" font-size="5.500" fill="#e8e8e8">MySQL</text></svg><svg style="left:292px;top:697px" width="20" height="19" viewBox="0 0 20 19"><rect width="20" height="19" fill="#2bc56b"/><path d="M10 0 H20 V19 H12 Z" fill="#e8d53a"/><path d="M14 0 H20 V8 Z" fill="#2aa9e0"/><rect x="2.500" y="2.500" width="14" height="14" fill="#0a0a0a"/><text x="4" y="10" font-family="Liberation Sans,sans-serif" font-weight="bold" font-size="7.500" fill="#fff">PC</text><rect x="4" y="13" width="5" height="1.200" fill="#fff"/></svg><svg style="left:333px;top:696px" width="22" height="22" viewBox="0 0 22 22"><circle cx="10" cy="10" r="10" fill="#2ea1dc"/><path d="M4 10 L15.500 5 L13.500 15.500 L9.500 12.500 L8 14.500 L7.800 11.500 Z" fill="#fff"/><rect x="11" y="14" width="10" height="7" fill="#e0392f"/><text x="12.500" y="19.800" font-family="Liberation Sans,sans-serif" font-size="5.500" fill="#f5d0d0">40</text></svg><svg style="left:375px;top:696px" width="19" height="21" viewBox="0 0 19 21"><path d="M5 1 L18 3 L14 20 L1 17 Z" fill="#dfeef0"/><path d="M5 5 L15 7 L12 19 L2 16 Z" fill="#8fd0d8"/><path d="M14 20 L18 3 L19 5 L15.500 20 Z" fill="#e8dca0"/></svg>
<svg style="left:1094px;top:701px" width="20" height="12" viewBox="0 0 20 12"><rect x="0.700" y="0.700" width="18.600" height="10.600" rx="1" fill="none" stroke="#f2f2f2" stroke-width="1.300"/><path d="M2.500 3.400 H17.500 M2.500 6 H17.500" stroke="#f2f2f2" stroke-width="1.700" stroke-dasharray="2.100 0.700"/><path d="M5 8.700 H15" stroke="#f2f2f2" stroke-width="1.200"/></svg><svg style="left:1123px;top:705px" width="6" height="4" viewBox="0 0 6 4"><path d="M0 4 L3 0 L6 4 Z" fill="#dcdcdc"/></svg><svg style="left:1138px;top:702px" width="11" height="11" viewBox="0 0 11 11"><path d="M0.600 0 V11" stroke="#ddd" stroke-width="1.200"/><path d="M1.500 1 H7 V5.500 H1.500 Z" fill="#e8e8e8"/><circle cx="7" cy="7.500" r="3.300" fill="#e03a2f"/><path d="M5.500 6 L8.500 9 M8.500 6 L5.500 9" stroke="#fff" stroke-width="1"/></svg><svg style="left:1153px;top:702px" width="11" height="11" viewBox="0 0 11 11"><rect x="4.700" y="1.700" width="5" height="8.600" fill="none" stroke="#eee" stroke-width="1.300"/><rect x="6" y="0.500" width="2.400" height="1.200" fill="#eee"/><path d="M0 4 H3.500 M1.700 2.300 V5.700" stroke="#eee" stroke-width="1.200"/></svg><svg style="left:1170px;top:702px" width="7" height="11" viewBox="0 0 7 11"><path d="M0.500 3.800 H2.500 L6 0.500 V10.500 L2.500 7.200 H0.500 Z" fill="#f2f2f2"/></svg><svg style="left:1185px;top:703px" width="11" height="9" viewBox="0 0 11 9"><path d="M0 9 L11 0 V9 Z" fill="#b9bcbc"/></svg><div class="t" style="left:1206px;top:702px;color:#f4f4f4;font-size:7.800px;letter-spacing:-0.550px">РУС</div><div class="t" style="left:1232px;top:696.800px;width:36px;text-align:center;color:#f4f4f4;font-size:8.300px;letter-spacing:-0.650px">16:52</div><div class="t" style="left:1228px;top:708.400px;width:44px;text-align:center;color:#f4f4f4;font-size:8.300px;letter-spacing:-0.650px">31.10.2020</div>
</div>
</body>
</html>
